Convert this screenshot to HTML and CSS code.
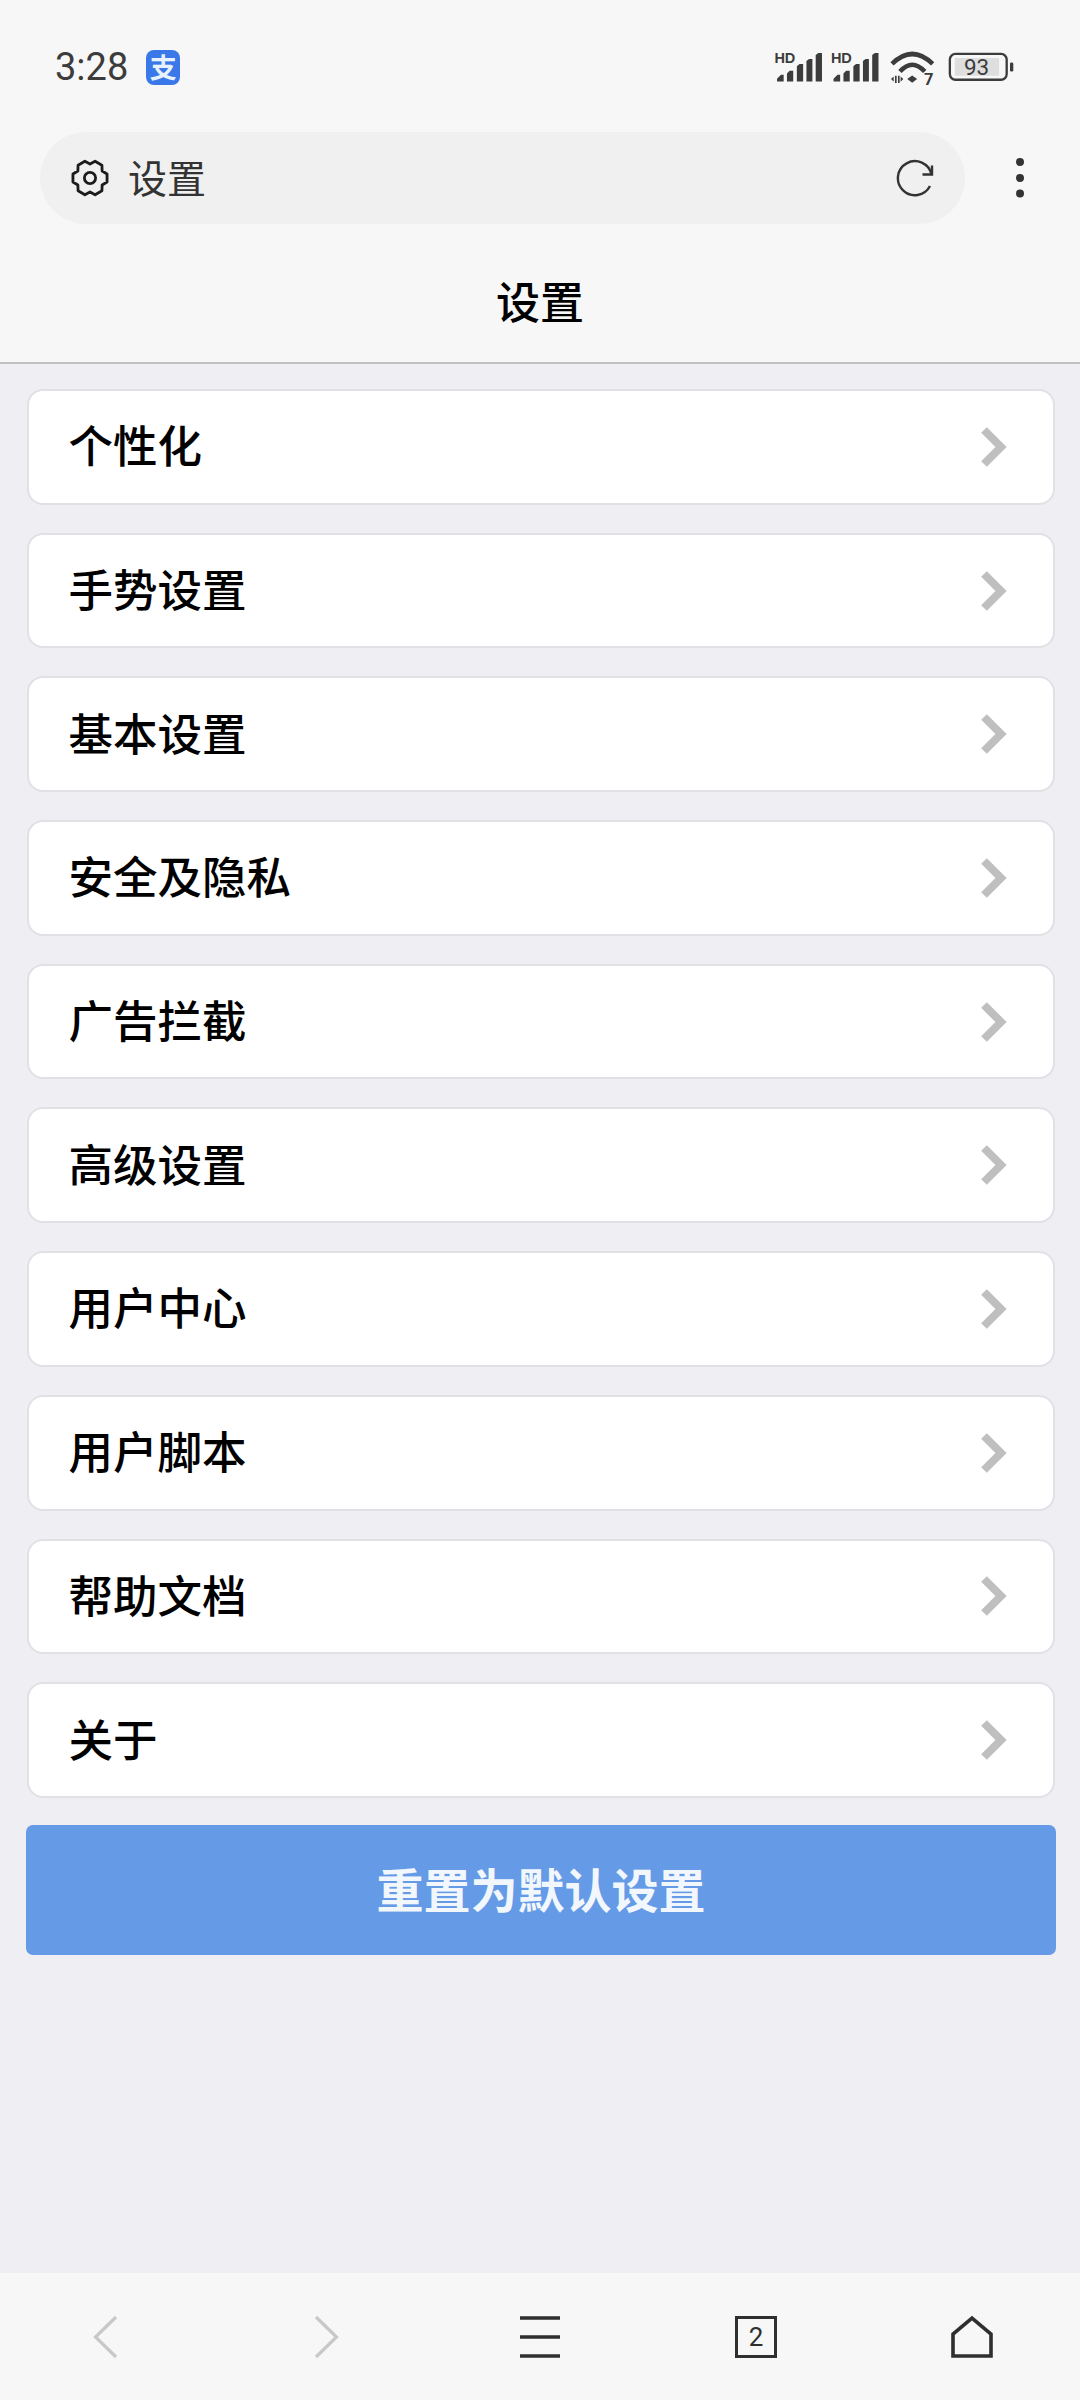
FILE: index.html
```html
<!DOCTYPE html>
<html lang="zh-CN">
<head>
<meta charset="utf-8">
<title>设置</title>
<link rel="stylesheet" href="styles.css">
</head>
<body>
<div class="app">
  <header class="top">
    <div class="status">
      <div class="status-left">
        <span class="time">3:28</span>
        <span class="alipay">支</span>
      </div>
      <svg class="status-icons" viewBox="90 90 750 115" width="250" height="38">
        <g class="sig">
          <text x="100" y="128" class="hd">HD</text>
          <path d="M108 185v-8l12-12h8v20zM138 185v-24l8-8h11v32zM168 185v-46l8-7h11v53zM197 185v-62l8-6h10v68zM225 185v-80l8-6h11v86z"/>
        </g>
        <g class="sig" transform="translate(171 0)">
          <text x="100" y="128" class="hd">HD</text>
          <path d="M108 185v-8l12-12h8v20zM138 185v-24l8-8h11v32zM168 185v-46l8-7h11v53zM197 185v-62l8-6h10v68zM225 185v-80l8-6h11v86z"/>
        </g>
        <path class="wifi" d="M456 132Q517 72 579 132M480 155Q517 114 555 155"/>
        <path class="sigfill" d="M517 167l15 11-15 11-15-11zM453 178l8-8v16zM465 168h5v22h-5zM474 168h5v22h-5zM482 170l8 8-8 8z"/>
        <text x="553" y="195" class="seven">7</text>
        <rect class="bat-fill" x="646" y="114" width="134" height="54"/>
        <rect class="bat" x="631" y="102" width="172" height="78" rx="17"/>
        <text x="712" y="165" class="pct">93</text>
        <rect class="sigfill" x="813" y="128" width="10" height="27" rx="4"/>
      </svg>
    </div>
    <div class="address">
      <div class="search">
        <svg class="gear" viewBox="-20 -20 40 40" width="40" height="40">
          <path d="M17.05 -3.94L17.05 3.94L12.12 7L11.93 12.8L5.12 16.74L0 14L-5.12 16.74L-11.93 12.8L-12.12 7L-17.05 3.94L-17.05 -3.94L-12.12 -7L-11.93 -12.8L-5.12 -16.74L0 -14L5.12 -16.74L11.93 -12.8L12.12 -7Z"/>
          <circle r="5.6"/>
        </svg>
        <span class="search-text">设置</span>
        <svg class="reload" viewBox="0 0 40 40" width="40" height="40">
          <path d="M35 28A17 17 0 1 1 36.500 16.500"/>
          <path d="M37 7.500V16.500H27.500"/>
        </svg>
      </div>
      <svg class="dots" viewBox="0 0 12 48" width="12" height="48">
        <circle cx="6" cy="8" r="4"/><circle cx="6" cy="24" r="4"/><circle cx="6" cy="39.500" r="4"/>
      </svg>
    </div>
    <h1 class="title">设置</h1>
  </header>

  <main class="content">
    <div class="list">
      <a class="row"><span class="label">个性化</span><svg class="chev" viewBox="0 0 28 42" width="28" height="42"><path d="M4 4L21 21L4 38"/></svg></a>
      <a class="row"><span class="label">手势设置</span><svg class="chev" viewBox="0 0 28 42" width="28" height="42"><path d="M4 4L21 21L4 38"/></svg></a>
      <a class="row"><span class="label">基本设置</span><svg class="chev" viewBox="0 0 28 42" width="28" height="42"><path d="M4 4L21 21L4 38"/></svg></a>
      <a class="row"><span class="label">安全及隐私</span><svg class="chev" viewBox="0 0 28 42" width="28" height="42"><path d="M4 4L21 21L4 38"/></svg></a>
      <a class="row"><span class="label">广告拦截</span><svg class="chev" viewBox="0 0 28 42" width="28" height="42"><path d="M4 4L21 21L4 38"/></svg></a>
      <a class="row"><span class="label">高级设置</span><svg class="chev" viewBox="0 0 28 42" width="28" height="42"><path d="M4 4L21 21L4 38"/></svg></a>
      <a class="row"><span class="label">用户中心</span><svg class="chev" viewBox="0 0 28 42" width="28" height="42"><path d="M4 4L21 21L4 38"/></svg></a>
      <a class="row"><span class="label">用户脚本</span><svg class="chev" viewBox="0 0 28 42" width="28" height="42"><path d="M4 4L21 21L4 38"/></svg></a>
      <a class="row"><span class="label">帮助文档</span><svg class="chev" viewBox="0 0 28 42" width="28" height="42"><path d="M4 4L21 21L4 38"/></svg></a>
      <a class="row"><span class="label">关于</span><svg class="chev" viewBox="0 0 28 42" width="28" height="42"><path d="M4 4L21 21L4 38"/></svg></a>
    </div>
    <button class="reset">重置为默认设置</button>
  </main>

  <nav class="bottom">
    <svg class="nav-dim" viewBox="0 0 30 44" width="30" height="44"><path d="M23 2L2.500 22L23 42"/></svg>
    <svg class="nav-dim" viewBox="0 0 30 44" width="30" height="44"><path d="M7 2L27.500 22L7 42"/></svg>
    <svg class="nav-on" viewBox="0 0 44 44" width="44" height="44"><path d="M2 3H42M2 22H42M2 41H42"/></svg>
    <div class="tab-count">2</div>
    <svg class="nav-on" viewBox="0 0 44 44" width="44" height="44"><path d="M3 41V19L22 3L41 19V41Z"/></svg>
  </nav>
</div>
</body>
</html>
```
FILE: styles.css
```css
* { box-sizing: border-box; }
html, body { margin: 0; padding: 0; }
body {
  width: 1080px;
  height: 2400px;
  background: #eeeef3;
  font-family: "Noto Sans CJK SC", "Noto Sans", sans-serif;
  color: #000;
  overflow: hidden;
}
.app { display: flex; flex-direction: column; height: 2400px; }

.top {
  height: 364px;
  background: #f7f7f8;
  border-bottom: 2px solid #c0c0c2;
  flex: none;
}
.status {
  height: 132px;
  display: flex;
  justify-content: space-between;
  align-items: flex-start;
  padding: 50px 60px 0 55px;
}
.status-left { display: flex; align-items: center; gap: 18px; height: 35px; }
.time { font-family: Roboto, sans-serif; font-size: 38px; color: #3c3c3c; line-height: 35px; }
.alipay {
  width: 34px; height: 35px;
  border-radius: 8px;
  background: #3a77e8;
  color: #e8f2ff;
  font-size: 27px;
  font-weight: 700;
  line-height: 34px;
  text-align: center;
}
.status-icons { display: block; }
.sig path, .sigfill, .sig text { fill: #3c3c3c; }
.hd { font-family: "Liberation Sans", sans-serif; font-weight: 700; font-size: 44px; }
.wifi { fill: none; stroke: #3c3c3c; stroke-width: 14; }
.seven { font-family: Roboto, sans-serif; font-weight: 700; font-size: 50px; fill: #3c3c3c; }
.bat-fill { fill: #dedede; }
.bat { fill: none; stroke: #3c3c3c; stroke-width: 7; }
.pct { font-family: Roboto, sans-serif; font-size: 68px; fill: #3c3c3c; text-anchor: middle; }

.address {
  display: flex;
  align-items: center;
  height: 92px;
  padding-left: 40px;
}
.search {
  width: 925px;
  height: 92px;
  border-radius: 46px;
  background: #f0f0f1;
  display: flex;
  align-items: center;
  padding: 0 30px;
}
.gear path, .gear circle { fill: none; stroke: #1c1c1c; stroke-width: 2.8; stroke-linejoin: round; }
.search-text { font-size: 39px; color: #333; margin: 0 0 3px 18px; flex: 1; line-height: 1; }
.reload path { fill: none; stroke: #333; stroke-width: 2.4; }
.dots { margin-left: 49px; }
.dots circle { fill: #333; }

.title {
  margin: 0;
  height: 138px;
  display: flex;
  align-items: center;
  justify-content: center;
  font-size: 44px;
  font-weight: 500;
  padding-top: 14px;
}

.content { flex: 1; padding: 25px 24px 0 26px; }
.list { display: flex; flex-direction: column; gap: 28px; padding: 0 1px; }
.row {
  height: 115.7px;
  display: flex;
  align-items: center;
  justify-content: space-between;
  padding: 0 45px 0 39.5px;
  background: #fff;
  border: 2px solid #e1e1e5;
  border-radius: 16px;
  font-size: 44.5px;
  font-weight: 500;
}
.label { margin-bottom: 6px; }
.chev path { fill: none; stroke: #bfbfbf; stroke-width: 8; }
.reset {
  display: block;
  width: 1030px;
  height: 130px;
  margin-top: 27px;
  border: 0;
  border-radius: 7px;
  background: #659ae6;
  color: #f2f7fd;
  font-family: inherit;
  font-size: 47px;
  font-weight: 700;
  padding: 0 0 4px;
}

.bottom {
  height: 127px;
  flex: none;
  background: #f7f7f8;
  display: grid;
  grid-template-columns: repeat(5, 1fr);
  justify-items: center;
  align-items: center;
}
.nav-dim path { fill: none; stroke: #c8c8c8; stroke-width: 3.2; }
.nav-on path { fill: none; stroke: #2f2f2f; stroke-width: 3.6; }
.tab-count {
  width: 42px; height: 42px;
  border: 3.5px solid #2f2f2f;
  font-family: Roboto, sans-serif;
  font-size: 26px;
  color: #2f2f2f;
  display: flex;
  align-items: center;
  justify-content: center;
}
```
